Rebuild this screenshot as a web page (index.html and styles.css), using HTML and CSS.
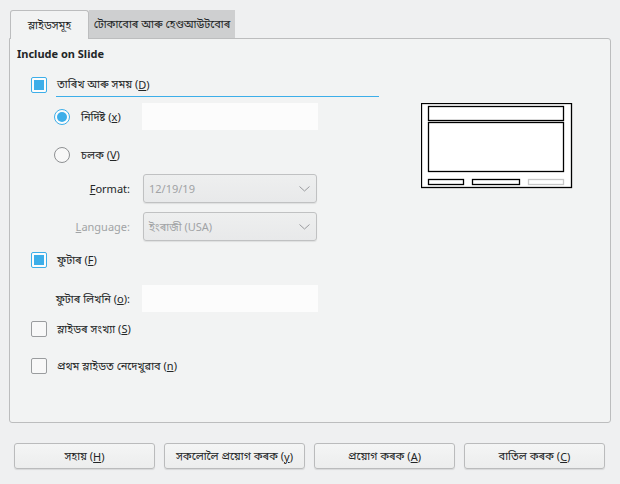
FILE: index.html
```html
<!DOCTYPE html>
<html>
<head>
<meta charset="utf-8">
<link rel="stylesheet" href="styles.css">
</head>
<body>
<div class="dialog">
  <div class="tabs">
    <div class="tab active">স্লাইডসমূহ</div>
    <div class="tab">টোকাবোৰ আৰু হেণ্ডআউটবোৰ</div>
  </div>
  <div class="panel">
    <div class="title">Include on Slide</div>
    <div class="content">
      <div class="options">
        <div class="row check-row date">
          <span class="checkbox checked"></span>
          <span class="check-label underline">তাৰিখ আৰু সময় (<u>D</u>)</span>
        </div>
        <div class="row form-row r-fixed">
          <div class="lab radio-lab"><span class="radio checked"></span><span>নিৰ্দিষ্ট (<u>x</u>)</span></div>
          <div class="field"></div>
        </div>
        <div class="row form-row r-var">
          <div class="lab radio-lab"><span class="radio"></span><span>চলক (<u>V</u>)</span></div>
        </div>
        <div class="row form-row r-format">
          <div class="lab text-lab"><u>F</u>ormat:</div>
          <div class="combo"><span>12/19/19</span><svg class="chev" width="11" height="6" viewBox="0 0 11 6"><path d="M0.5 0.5 L5.5 5 L10.5 0.5" fill="none" stroke="#9a9c9e" stroke-width="1"/></svg></div>
        </div>
        <div class="row form-row r-lang">
          <div class="lab text-lab disabled"><u>L</u>anguage:</div>
          <div class="combo"><span>ইংৰাজী (USA)</span><svg class="chev" width="11" height="6" viewBox="0 0 11 6"><path d="M0.5 0.5 L5.5 5 L10.5 0.5" fill="none" stroke="#9a9c9e" stroke-width="1"/></svg></div>
        </div>
        <div class="row check-row r-footer">
          <span class="checkbox checked"></span>
          <span class="check-label">ফুটাৰ (<u>F</u>)</span>
        </div>
        <div class="row form-row r-ftext">
          <div class="lab text-lab">ফুটাৰ লিখনি (<u>o</u>):</div>
          <div class="field"></div>
        </div>
        <div class="row check-row r-num">
          <span class="checkbox"></span>
          <span class="check-label">স্লাইডৰ সংখ্যা (<u>S</u>)</span>
        </div>
        <div class="row check-row r-first">
          <span class="checkbox"></span>
          <span class="check-label">প্ৰথম স্লাইডত নেদেখুৱাব (<u>n</u>)</span>
        </div>
      </div>
      <div class="preview">
        <svg width="152" height="86" viewBox="0 0 152 86">
          <rect x="0.5" y="0.5" width="150" height="84" fill="#ffffff" stroke="#000" stroke-width="1.3"/>
          <rect x="7.5" y="3.5" width="135" height="14" fill="none" stroke="#000" stroke-width="1.3"/>
          <rect x="7.5" y="19.5" width="135" height="49" fill="none" stroke="#000" stroke-width="1.3"/>
          <rect x="7.5" y="76.5" width="35" height="5" fill="none" stroke="#000" stroke-width="1.3"/>
          <rect x="51.5" y="76.5" width="47" height="5" fill="none" stroke="#000" stroke-width="1.3"/>
          <rect x="107.5" y="76.5" width="35" height="5" fill="none" stroke="#c8c8c8" stroke-width="1.3"/>
        </svg>
      </div>
    </div>
  </div>
  <div class="buttons">
    <div class="btn">সহায় (<u>H</u>)</div>
    <div class="btn">সকলোলৈ প্ৰয়োগ কৰক (<u>y</u>)</div>
    <div class="btn">প্ৰয়োগ কৰক (<u>A</u>)</div>
    <div class="btn">বাতিল কৰক (<u>C</u>)</div>
  </div>
</div>
</body>
</html>
```
FILE: styles.css
```css
html, body {
  margin: 0;
  padding: 0;
  background: #eff0f1;
}
body {
  width: 620px;
  height: 484px;
  overflow: hidden;
  font-family: "Noto Sans", "Noto Sans Bengali", "Lohit Assamese", "Lohit Bengali", sans-serif;
  font-size: 11px;
  color: #232627;
}
u { text-decoration: underline; text-underline-offset: 1px; }

.tabs {
  display: flex;
  margin: 10px 0 0 10px;
  height: 28px;
  position: relative;
  z-index: 1;
}
.tab {
  display: flex;
  align-items: center;
  justify-content: center;
  height: 28px;
  box-sizing: border-box;
  padding: 0 3px;
  background: #cecfd0;
  white-space: nowrap;
}
.tab.active {
  width: 79px;
  background: #f2f3f3;
  border: 1px solid #bcbdbe;
  border-bottom: none;
  border-radius: 3px 3px 0 0;
  height: 29px;
}
.tab + .tab { width: 146px; }

.panel {
  margin: 0 9px 0 9px;
  height: 385px;
  box-sizing: border-box;
  border: 1px solid #bcbdbe;
  border-radius: 0 3px 3px 3px;
  background: #f2f3f3;
}
.title {
  font-weight: bold;
  height: 16px;
  line-height: 16px;
  margin: 7px 0 0 7px;
}
.content {
  display: flex;
  align-items: flex-start;
}
.options {
  width: 369px;
  padding-left: 21px;
}
.row {
  display: flex;
  align-items: center;
}
.check-row { height: 24px; }
.check-row .check-label { margin-left: 10px; }
.date {
  margin-top: 10px;
  height: 25px;
}
.date .check-label {
  margin-left: 9px;
  width: 322px;
  align-self: stretch;
  display: flex;
  align-items: center;
  border-bottom: 1px solid #3daee9;
  padding-left: 1px;
}
.checkbox {
  width: 16px;
  height: 16px;
  box-sizing: border-box;
  border: 1px solid #9a9c9e;
  border-radius: 2px;
  background: #f8f8f8;
  flex: none;
  position: relative;
}
.checkbox.checked {
  border-color: #3daee9;
  background: #fcfcfc;
}
.checkbox.checked::after {
  content: "";
  position: absolute;
  left: 2px; top: 2px; right: 2px; bottom: 2px;
  background: #3daee9;
}
.radio {
  width: 16px;
  height: 16px;
  box-sizing: border-box;
  border: 1px solid #8e9092;
  border-radius: 50%;
  background: #f8f8f8;
  flex: none;
  position: relative;
  margin-right: 11px;
}
.radio.checked {
  border-color: #3daee9;
  background: #fcfcfc;
}
.radio.checked::after {
  content: "";
  position: absolute;
  left: 2px; top: 2px; right: 2px; bottom: 2px;
  border-radius: 50%;
  background: #3daee9;
}
.form-row { height: 27px; }
.lab {
  width: 111px;
  flex: none;
  box-sizing: border-box;
  display: flex;
  align-items: center;
}
.radio-lab { padding-left: 23px; }
.text-lab {
  justify-content: flex-end;
  padding-right: 12px;
}
.disabled { color: #a1a3a5; }
.r-fixed { margin-top: 6px; }
.r-var { margin-top: 11px; }
.r-format { margin-top: 6px; height: 29px; }
.r-lang { margin-top: 9px; height: 29px; }
.r-footer { margin-top: 7px; }
.r-ftext { margin-top: 13px; }
.r-num { margin-top: 5px; }
.r-first { margin-top: 13px; }
.field {
  width: 176px;
  height: 27px;
  background: #fcfcfc;
}
.combo {
  margin-left: 1px;
  width: 174px;
  height: 29px;
  box-sizing: border-box;
  border: 1px solid #c0c1c2;
  border-radius: 3px;
  background: linear-gradient(#eeefef, #e8e9ea);
  box-shadow: 0 1px 1px rgba(0,0,0,0.08);
  display: flex;
  align-items: center;
  justify-content: space-between;
  padding: 0 6px 0 5px;
  color: #a1a3a5;
}
.chev { margin-top: 1px; }
.preview {
  margin-top: 41px;
  margin-left: 21px;
}
.preview svg { display: block; }

.buttons {
  display: flex;
  gap: 9px;
  margin: 20px 0 0 14px;
}
.btn {
  width: 141px;
  height: 26px;
  box-sizing: border-box;
  border: 1px solid #babbbc;
  border-radius: 3px;
  background: linear-gradient(#f4f5f5, #eceded);
  box-shadow: 0 1px 1px rgba(0,0,0,0.1);
  display: flex;
  align-items: center;
  justify-content: center;
  white-space: nowrap;
}
```
